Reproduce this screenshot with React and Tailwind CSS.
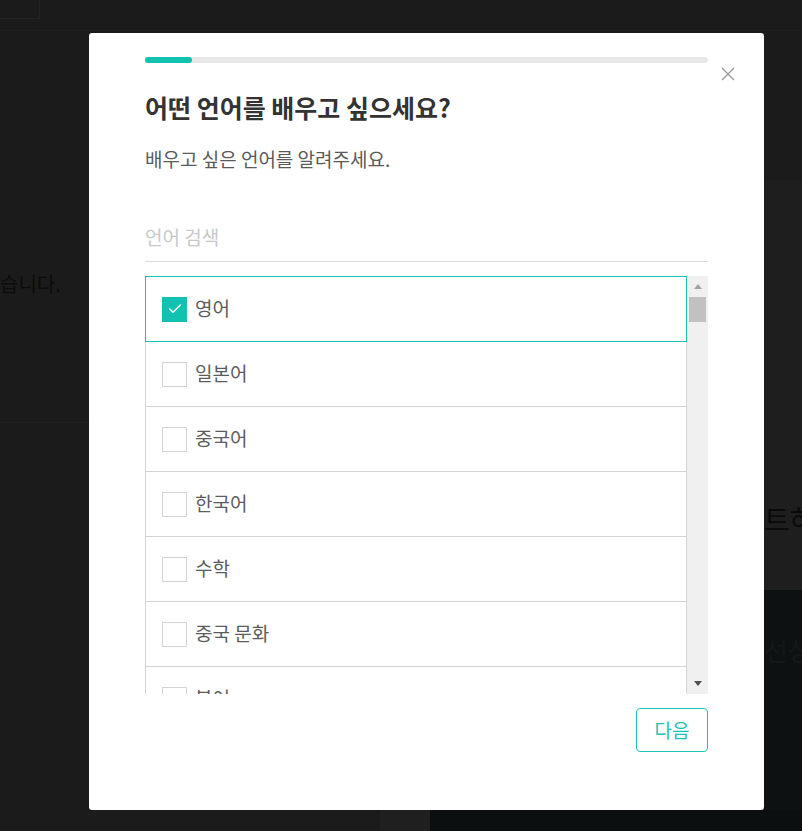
import { Check } from "lucide-react";

const items = [
  { label: "영어", checked: true },
  { label: "일본어" },
  { label: "중국어" },
  { label: "한국어" },
  { label: "수학" },
  { label: "중국 문화" },
  { label: "불어" },
  { label: "독일어" },
];

const font = { fontFamily: '"Malgun Gothic", "Noto Sans CJK KR", "Noto Sans", sans-serif' };

function Item({ label, checked, first }) {
  return (
    <div
      className={
        "h-[66px] shrink-0 flex items-center pl-4 gap-2 border " +
        (checked ? "border-[#1cc3b2] relative z-10 " : "border-[#d4d4d4] ") +
        (first ? "" : "-mt-px")
      }
    >
      {checked ? (
        <span className="w-[25px] h-[25px] bg-[#12c2b0] flex items-center justify-center">
          <Check className="w-4 h-4 text-white" strokeWidth={2.2} />
        </span>
      ) : (
        <span className="w-[25px] h-[25px] border border-[#d4d4d4] bg-white" />
      )}
      <span className="text-[19px] text-[#5c5c5c] leading-none -mt-[3px]">{label}</span>
    </div>
  );
}

export default function App() {
  return (
    <div className="relative w-[802px] h-[831px] overflow-hidden bg-[#1b1b1b]" style={font}>
      {/* page behind the dimmed overlay */}
      <div className="flex flex-col h-full">
        <div className="h-[31px] border-b border-[#202020] shrink-0">
          <div className="w-[40px] h-[19px] border-r border-b border-[#242424]" />
        </div>
        <div className="flex flex-1">
          <div className="w-[89px] flex flex-col">
            <div className="h-[392px] border-b border-[#1f1f1f] pt-[238px] text-[20px] text-[#0c0c0c] whitespace-nowrap">
              습니다.
            </div>
          </div>
          <div className="flex-1" />
          <div className="w-[38px] flex flex-col">
            <div className="h-[149px]" />
            <div className="h-[410px] bg-[#1e1e1e] border-b border-[#202020] pt-[318px] text-[28px] text-[#0a0a0a] whitespace-nowrap">
              트하
            </div>
            <div className="flex-1 bg-[#0d1111] pt-[40px] text-[26px] text-[#141818] whitespace-nowrap">
              선상
            </div>
          </div>
        </div>
        <div className="h-[21px] flex shrink-0">
          <div className="w-[380px]" />
          <div className="w-[50px] bg-[#1f1f1f]" />
          <div className="flex-1 bg-[#0b0f0f]" />
        </div>
      </div>

      {/* modal */}
      <div className="absolute left-[89px] top-[33px] w-[675px] h-[777px] bg-white rounded-[3px] px-14 pt-6">
        <div className="h-1.5 rounded-full bg-[#e8e8e8]">
          <div className="h-full w-[47px] rounded-full bg-[#12c2b0]" />
        </div>
        <button className="absolute right-[29px] top-[34px] text-[#9a9a9a]">
          <svg width="14" height="14" viewBox="0 0 14 14" fill="none" stroke="currentColor" strokeWidth="1.3">
            <path d="M1 1 L13 13 M13 1 L1 13" />
          </svg>
        </button>
        <h1 className="mt-[27px] text-[25px] leading-[34px] font-bold text-[#333]">어떤 언어를 배우고 싶으세요?</h1>
        <p className="mt-[22px] text-[19px] leading-[26px] text-[#5a5a5a]">배우고 싶은 언어를 알려주세요.</p>
        <div className="mt-[52px] border-b border-[#dcdcdc] pb-[11px] text-[19px] leading-[26px] text-[#c9c9c9]">
          언어 검색
        </div>
        <div className="mt-[14px] h-[418px] flex">
          <div className="flex-1 flex flex-col overflow-hidden">
            {items.map((it, i) => (
              <Item key={it.label} first={i === 0} {...it} />
            ))}
          </div>
          <div className="w-[21px] bg-[#f0f0f0] flex flex-col items-center">
            <div className="h-[21px] flex items-center justify-center">
              <span className="w-0 h-0 border-x-[4px] border-x-transparent border-b-[5px] border-b-[#a3a3a3]" />
            </div>
            <div className="w-[17px] h-[25px] bg-[#c1c1c1]" />
            <div className="flex-1" />
            <div className="h-[21px] flex items-center justify-center">
              <span className="w-0 h-0 border-x-[4px] border-x-transparent border-t-[5px] border-t-[#505050]" />
            </div>
          </div>
        </div>
        <div className="mt-[14px] flex justify-end">
          <button className="w-[72px] h-[44px] border border-[#1cc3b2] rounded-[4px] text-[19px] text-[#1cc3b2]">
            다음
          </button>
        </div>
      </div>
    </div>
  );
}
